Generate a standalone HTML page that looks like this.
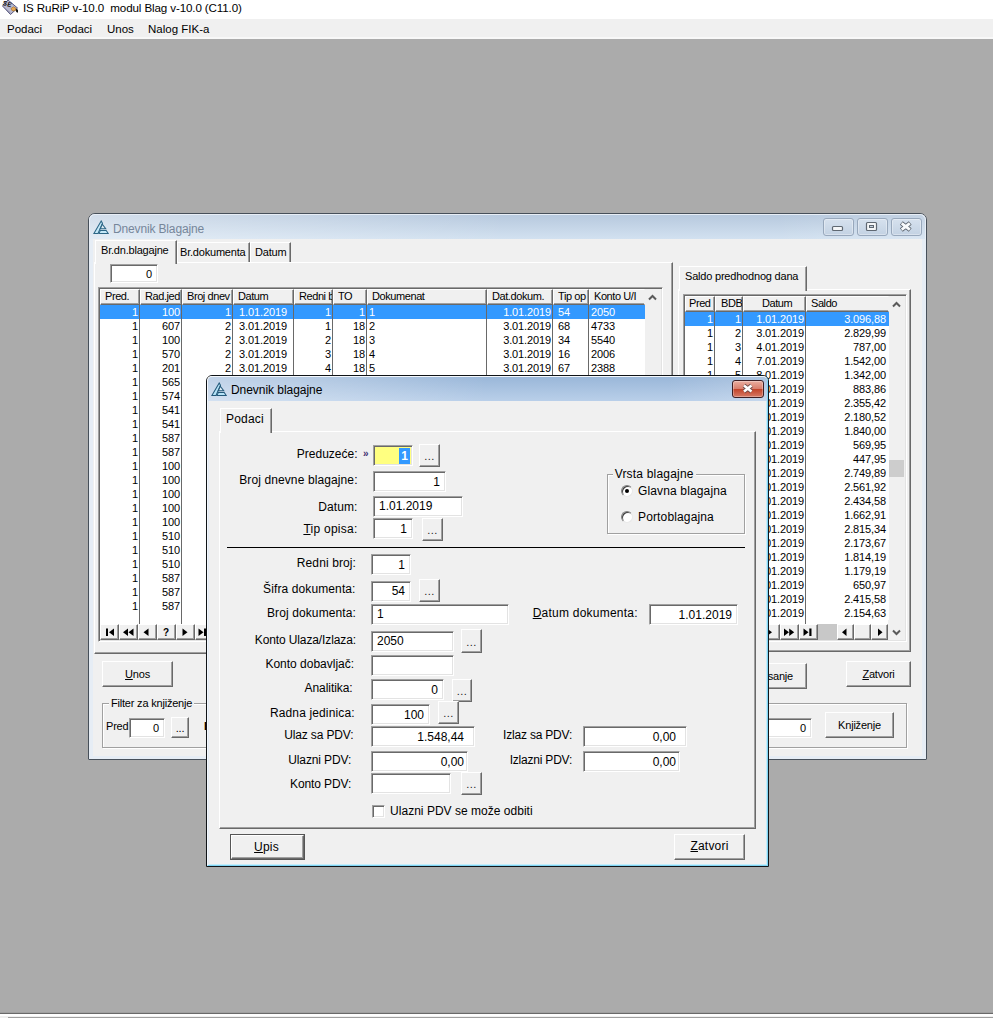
<!DOCTYPE html>
<html><head><meta charset="utf-8"><title>IS RuRiP</title>
<style>
*{box-sizing:border-box;margin:0;padding:0}
html,body{width:993px;height:1018px;overflow:hidden;background:#ababab;font-family:"Liberation Sans",sans-serif;font-size:12px;letter-spacing:0.2px;color:#000}
div,span{position:absolute;white-space:nowrap}
u{text-decoration:underline;text-underline-offset:1px}
.t11{font-size:11px;letter-spacing:-0.2px}
.lbl{height:14px;line-height:14px;text-align:right}
.ll{height:14px;line-height:14px}
.ed{background:#fff;border:1px solid;border-color:#a0a0a0 #fff #fff #a0a0a0;box-shadow:inset 1px 1px 0 #696969,inset -1px -1px 0 #e3e3e3;line-height:15px;padding:2px 5px 0 5px;letter-spacing:0}
.r{text-align:right}
.btn{background:#f0f0f0;border:1px solid;border-color:#fff #696969 #696969 #fff;box-shadow:inset -1px -1px 0 #a0a0a0,inset 1px 1px 0 #f0f0f0;text-align:center}
.gb{border:1px solid #a0a0a0;box-shadow:inset 1px 1px 0 #fff,1px 1px 0 #fff}
.gbl{background:#f0f0f0;padding:0 2px;height:14px;line-height:14px}
.gh{height:16px;line-height:12px;font-size:11px;letter-spacing:-0.42px;background:#f0f0f0;padding:0 0 0 4px;overflow:hidden;border:1px solid;border-color:#fff #696969 #696969 #fff;box-shadow:inset -1px -1px 0 #a0a0a0}
.gh.gl{border-right-color:#f0f0f0;box-shadow:inset 0 -1px 0 #a0a0a0}
.gc{height:14px;line-height:14px;font-size:11px;letter-spacing:-0.12px;padding:0;overflow:hidden;background:#fff;border-right:1px solid #696969}
.gc.gl{border-right:1px solid #fff}
.gc.gl.sel{border-right-color:#3399ff}
.gc.sel{background:#3399ff;color:#fff;border-right-color:#696969}
.vs{width:1px;background:#696969}
.nav{background:#f0f0f0;border:1px solid;border-color:#fff #696969 #696969 #fff;box-shadow:inset -1px -1px 0 #a0a0a0;height:16px;width:19px}
.tab{background:#f0f0f0;border-top:1px solid #fff;border-left:1px solid #fff;border-right:1px solid #696969;box-shadow:inset -1px 0 0 #a0a0a0;font-size:11px;letter-spacing:-0.2px;text-align:left}
</style></head><body>

<!-- app title + menu -->
<div style="left:0;top:0;width:993px;height:19px;background:#fff"></div>
<svg style="position:absolute;left:0;top:0" width="20" height="16" viewBox="0 0 20 16"><path d="M2.500 6 L8 0 L17.500 8 L10.500 14.500 Z" fill="#b9b9cf" stroke="#5a5a80" stroke-width="1"/><path d="M4 7.500 L10.500 13" stroke="#8a8aa8" stroke-width="1"/><path d="M11 8.500 L13.500 6.800 L16 8.300 L15.500 10.500 L12.500 11 Z" fill="#e8a850" stroke="#a06a20" stroke-width="0.600"/><path d="M15.800 8.800 L18 9.800 L18 12.800 L16.200 12 Z" fill="#111"/><text x="2.600" y="4.800" font-family="Liberation Sans, sans-serif" font-size="6.500" font-weight="bold" fill="#111" transform="rotate(18 3 4)">SE</text></svg>
<div style="left:23px;top:0;height:16px;line-height:16px;font-size:11.6px;letter-spacing:-0.12px;white-space:pre">IS RuRiP v-10.0  modul Blag v-10.0 (C11.0)</div>
<div style="left:0;top:19px;width:993px;height:18px;background:#f0f0f0"></div>
<div style="left:0;top:37px;width:993px;height:2px;background:#f8f8f8"></div>
<div style="left:7px;top:21px;height:16px;line-height:16px;font-size:11.5px;letter-spacing:0">Podaci</div>
<div style="left:57px;top:21px;height:16px;line-height:16px;font-size:11.5px;letter-spacing:0">Podaci</div>
<div style="left:107px;top:21px;height:16px;line-height:16px;font-size:11.5px;letter-spacing:0">Unos</div>
<div style="left:148px;top:21px;height:16px;line-height:16px;font-size:11.5px;letter-spacing:0">Nalog FIK-a</div>

<!-- bottom status edge -->
<div style="left:0;top:1012px;width:993px;height:1px;background:#a0a0a0"></div>
<div style="left:0;top:1013px;width:993px;height:1px;background:#696969"></div>
<div style="left:0;top:1014px;width:993px;height:2px;background:#fff"></div>
<div style="left:0;top:1016px;width:993px;height:2px;background:#f0f0f0"></div>
<div style="left:8px;top:1017px;width:985px;height:1px;background:#a0a0a0"></div>

<!-- ================= Window 1 ================= -->
<div id="w1" style="left:88px;top:213px;width:839px;height:547px;border:1px solid #47505a;border-radius:7px 7px 1px 1px;background:#e6edf5"></div>
<div style="left:89px;top:214px;width:837px;height:25px;border-radius:6px 6px 0 0;background:linear-gradient(to right,rgba(255,255,255,.38) 0%,rgba(255,255,255,.2) 25%,rgba(255,255,255,0) 50%,rgba(255,255,255,0) 82%,rgba(255,255,255,.18) 100%),linear-gradient(#b7c9de,#d2e1f0);border-top:1px solid #e8eef6;border-left:1px solid #e8eef6;border-right:1px solid #e8eef6"></div>
<div style="left:93px;top:239px;width:829px;height:517px;background:#f0f0f0"></div>
<svg style="position:absolute;left:93px;top:220px" width="16" height="15" viewBox="0 0 16 15"><g fill="#c4e8f8" stroke="#2b6585" stroke-width="1.050" stroke-linejoin="miter"><path d="M0.900 13.400 L8.200 1 L9.500 3.300 L5 13.400 Z"/><path d="M9.300 4.300 L12.700 8.700 L7.300 8.700 Z" fill="#e0ecf4"/><path d="M7.400 10.400 L13.200 10.400 L15.200 13.400 L6 13.400 Z"/></g></svg>
<div style="left:113px;top:221px;height:17px;line-height:17px;font-size:12px;letter-spacing:-0.15px;color:#76869a">Dnevnik Blagajne</div>
<!-- caption buttons -->
<div class="cb" style="left:823px;top:218px;width:31px;height:18px;border:1px solid #98a8bc;border-radius:3px;background:linear-gradient(#d6e1ee,#c3d2e3);box-shadow:inset 0 0 0 1px rgba(255,255,255,.35)"></div>
<div class="cb" style="left:857px;top:218px;width:31px;height:18px;border:1px solid #98a8bc;border-radius:3px;background:linear-gradient(#d6e1ee,#c3d2e3);box-shadow:inset 0 0 0 1px rgba(255,255,255,.35)"></div>
<div class="cb" style="left:891px;top:218px;width:31px;height:18px;border:1px solid #98a8bc;border-radius:3px;background:linear-gradient(#d6e1ee,#c3d2e3);box-shadow:inset 0 0 0 1px rgba(255,255,255,.35)"></div>
<svg style="position:absolute;left:823px;top:218px" width="100" height="18" viewBox="0 0 100 18"><rect x="9.500" y="8.500" width="10" height="4" rx="1" fill="#f4f6f8" stroke="#5f6872" stroke-width="1.200"/><rect x="43.500" y="4.500" width="10" height="8" rx="1" fill="#f4f6f8" stroke="#5f6872" stroke-width="1.200"/><rect x="46.500" y="7.500" width="4" height="2" fill="#c4d0de" stroke="#5f6872"/><path d="M78.300 5 L87.200 12 M87.200 5 L78.300 12" stroke="#59626c" stroke-width="4.600"/><path d="M78.700 5.300 L86.800 11.700 M86.800 5.300 L78.700 11.700" stroke="#f8fafc" stroke-width="2.800"/></svg>

<!-- left tab control page -->
<div style="left:94px;top:262px;width:579px;height:392px;border:1px solid;border-color:#fff #696969 #696969 #fff;box-shadow:inset -1px -1px 0 #a0a0a0"></div>
<div class="tab" style="left:95px;top:240px;width:82px;height:24px;padding:2px 0 0 5px;line-height:14px">Br.dn.blagajne</div>
<div class="tab" style="left:177px;top:242px;width:73px;height:20px;padding:2px 0 0 2px;line-height:14px">Br.dokumenta</div>
<div class="tab" style="left:250px;top:242px;width:41px;height:20px;padding:2px 0 0 4px;line-height:14px">Datum</div>
<div class="ed r t11" style="left:110px;top:264px;width:48px;height:19px;padding-right:5px">0</div>

<!-- grid 1 frame -->
<div style="left:98px;top:287px;width:565px;height:355px;background:#fff;border:1px solid;border-color:#a0a0a0 #fff #fff #a0a0a0;box-shadow:inset 1px 1px 0 #696969,inset -1px -1px 0 #e3e3e3"></div>
<div style="left:645px;top:289px;width:16px;height:351px;background:#f0f0f0"></div>
<div class="vs" style="left:139px;top:305px;height:319px"></div><div class="vs" style="left:181px;top:305px;height:319px"></div><div class="vs" style="left:232px;top:305px;height:319px"></div><div class="vs" style="left:293px;top:305px;height:319px"></div><div class="vs" style="left:332px;top:305px;height:319px"></div><div class="vs" style="left:366px;top:305px;height:319px"></div><div class="vs" style="left:486px;top:305px;height:319px"></div><div class="vs" style="left:552px;top:305px;height:319px"></div><div class="vs" style="left:588px;top:305px;height:319px"></div>
<div class="gh" style="left:100px;top:289px;width:40px;padding-left:4px">Pred.</div>
<div class="gh" style="left:140px;top:289px;width:42px;padding-left:4px">Rad.jed</div>
<div class="gh" style="left:182px;top:289px;width:51px;padding-left:4px">Broj dnev</div>
<div class="gh" style="left:233px;top:289px;width:61px;padding-left:4px">Datum</div>
<div class="gh" style="left:294px;top:289px;width:39px;padding-left:4px">Redni b</div>
<div class="gh" style="left:333px;top:289px;width:34px;padding-left:4px">TO</div>
<div class="gh" style="left:367px;top:289px;width:120px;padding-left:4px">Dokumenat</div>
<div class="gh" style="left:487px;top:289px;width:66px;padding-left:4px">Dat.dokum.</div>
<div class="gh" style="left:553px;top:289px;width:36px;padding-left:4px">Tip op</div>
<div class="gh gl" style="left:589px;top:289px;width:56px;padding-left:4px">Konto U/I</div>
<div class="gc sel" style="left:100px;top:305px;width:40px;text-align:right;padding-right:1px">1</div>
<div class="gc sel" style="left:140px;top:305px;width:42px;text-align:right;padding-right:1px">100</div>
<div class="gc sel" style="left:182px;top:305px;width:51px;text-align:right;padding-right:1px">1</div>
<div class="gc sel" style="left:233px;top:305px;width:61px;text-align:center;">1.01.2019</div>
<div class="gc sel" style="left:294px;top:305px;width:39px;text-align:right;padding-right:1px">1</div>
<div class="gc sel" style="left:333px;top:305px;width:34px;text-align:right;padding-right:1px">1</div>
<div class="gc sel" style="left:367px;top:305px;width:120px;text-align:left;padding-left:2px">1</div>
<div class="gc sel" style="left:487px;top:305px;width:66px;text-align:right;padding-right:1px">1.01.2019</div>
<div class="gc sel" style="left:553px;top:305px;width:36px;text-align:left;padding-left:5px">54</div>
<div class="gc gl sel" style="left:589px;top:305px;width:56px;text-align:left;padding-left:2px">2050</div>
<div class="gc" style="left:100px;top:319px;width:40px;text-align:right;padding-right:1px">1</div>
<div class="gc" style="left:140px;top:319px;width:42px;text-align:right;padding-right:1px">607</div>
<div class="gc" style="left:182px;top:319px;width:51px;text-align:right;padding-right:1px">2</div>
<div class="gc" style="left:233px;top:319px;width:61px;text-align:center;">3.01.2019</div>
<div class="gc" style="left:294px;top:319px;width:39px;text-align:right;padding-right:1px">1</div>
<div class="gc" style="left:333px;top:319px;width:34px;text-align:right;padding-right:1px">18</div>
<div class="gc" style="left:367px;top:319px;width:120px;text-align:left;padding-left:2px">2</div>
<div class="gc" style="left:487px;top:319px;width:66px;text-align:right;padding-right:1px">3.01.2019</div>
<div class="gc" style="left:553px;top:319px;width:36px;text-align:left;padding-left:5px">68</div>
<div class="gc gl" style="left:589px;top:319px;width:56px;text-align:left;padding-left:2px">4733</div>
<div class="gc" style="left:100px;top:333px;width:40px;text-align:right;padding-right:1px">1</div>
<div class="gc" style="left:140px;top:333px;width:42px;text-align:right;padding-right:1px">100</div>
<div class="gc" style="left:182px;top:333px;width:51px;text-align:right;padding-right:1px">2</div>
<div class="gc" style="left:233px;top:333px;width:61px;text-align:center;">3.01.2019</div>
<div class="gc" style="left:294px;top:333px;width:39px;text-align:right;padding-right:1px">2</div>
<div class="gc" style="left:333px;top:333px;width:34px;text-align:right;padding-right:1px">18</div>
<div class="gc" style="left:367px;top:333px;width:120px;text-align:left;padding-left:2px">3</div>
<div class="gc" style="left:487px;top:333px;width:66px;text-align:right;padding-right:1px">3.01.2019</div>
<div class="gc" style="left:553px;top:333px;width:36px;text-align:left;padding-left:5px">34</div>
<div class="gc gl" style="left:589px;top:333px;width:56px;text-align:left;padding-left:2px">5540</div>
<div class="gc" style="left:100px;top:347px;width:40px;text-align:right;padding-right:1px">1</div>
<div class="gc" style="left:140px;top:347px;width:42px;text-align:right;padding-right:1px">570</div>
<div class="gc" style="left:182px;top:347px;width:51px;text-align:right;padding-right:1px">2</div>
<div class="gc" style="left:233px;top:347px;width:61px;text-align:center;">3.01.2019</div>
<div class="gc" style="left:294px;top:347px;width:39px;text-align:right;padding-right:1px">3</div>
<div class="gc" style="left:333px;top:347px;width:34px;text-align:right;padding-right:1px">18</div>
<div class="gc" style="left:367px;top:347px;width:120px;text-align:left;padding-left:2px">4</div>
<div class="gc" style="left:487px;top:347px;width:66px;text-align:right;padding-right:1px">3.01.2019</div>
<div class="gc" style="left:553px;top:347px;width:36px;text-align:left;padding-left:5px">16</div>
<div class="gc gl" style="left:589px;top:347px;width:56px;text-align:left;padding-left:2px">2006</div>
<div class="gc" style="left:100px;top:361px;width:40px;text-align:right;padding-right:1px">1</div>
<div class="gc" style="left:140px;top:361px;width:42px;text-align:right;padding-right:1px">201</div>
<div class="gc" style="left:182px;top:361px;width:51px;text-align:right;padding-right:1px">2</div>
<div class="gc" style="left:233px;top:361px;width:61px;text-align:center;">3.01.2019</div>
<div class="gc" style="left:294px;top:361px;width:39px;text-align:right;padding-right:1px">4</div>
<div class="gc" style="left:333px;top:361px;width:34px;text-align:right;padding-right:1px">18</div>
<div class="gc" style="left:367px;top:361px;width:120px;text-align:left;padding-left:2px">5</div>
<div class="gc" style="left:487px;top:361px;width:66px;text-align:right;padding-right:1px">3.01.2019</div>
<div class="gc" style="left:553px;top:361px;width:36px;text-align:left;padding-left:5px">67</div>
<div class="gc gl" style="left:589px;top:361px;width:56px;text-align:left;padding-left:2px">2388</div>
<div class="gc" style="left:100px;top:375px;width:40px;text-align:right;padding-right:1px">1</div>
<div class="gc" style="left:140px;top:375px;width:42px;text-align:right;padding-right:1px">565</div>
<div class="gc" style="left:182px;top:375px;width:51px;text-align:right;padding-right:1px"></div>
<div class="gc" style="left:233px;top:375px;width:61px;text-align:center;"></div>
<div class="gc" style="left:294px;top:375px;width:39px;text-align:right;padding-right:1px"></div>
<div class="gc" style="left:333px;top:375px;width:34px;text-align:right;padding-right:1px"></div>
<div class="gc" style="left:367px;top:375px;width:120px;text-align:left;padding-left:2px"></div>
<div class="gc" style="left:487px;top:375px;width:66px;text-align:right;padding-right:1px"></div>
<div class="gc" style="left:553px;top:375px;width:36px;text-align:left;padding-left:5px"></div>
<div class="gc gl" style="left:589px;top:375px;width:56px;text-align:left;padding-left:2px"></div>
<div class="gc" style="left:100px;top:389px;width:40px;text-align:right;padding-right:1px">1</div>
<div class="gc" style="left:140px;top:389px;width:42px;text-align:right;padding-right:1px">574</div>
<div class="gc" style="left:182px;top:389px;width:51px;text-align:right;padding-right:1px"></div>
<div class="gc" style="left:233px;top:389px;width:61px;text-align:center;"></div>
<div class="gc" style="left:294px;top:389px;width:39px;text-align:right;padding-right:1px"></div>
<div class="gc" style="left:333px;top:389px;width:34px;text-align:right;padding-right:1px"></div>
<div class="gc" style="left:367px;top:389px;width:120px;text-align:left;padding-left:2px"></div>
<div class="gc" style="left:487px;top:389px;width:66px;text-align:right;padding-right:1px"></div>
<div class="gc" style="left:553px;top:389px;width:36px;text-align:left;padding-left:5px"></div>
<div class="gc gl" style="left:589px;top:389px;width:56px;text-align:left;padding-left:2px"></div>
<div class="gc" style="left:100px;top:403px;width:40px;text-align:right;padding-right:1px">1</div>
<div class="gc" style="left:140px;top:403px;width:42px;text-align:right;padding-right:1px">541</div>
<div class="gc" style="left:182px;top:403px;width:51px;text-align:right;padding-right:1px"></div>
<div class="gc" style="left:233px;top:403px;width:61px;text-align:center;"></div>
<div class="gc" style="left:294px;top:403px;width:39px;text-align:right;padding-right:1px"></div>
<div class="gc" style="left:333px;top:403px;width:34px;text-align:right;padding-right:1px"></div>
<div class="gc" style="left:367px;top:403px;width:120px;text-align:left;padding-left:2px"></div>
<div class="gc" style="left:487px;top:403px;width:66px;text-align:right;padding-right:1px"></div>
<div class="gc" style="left:553px;top:403px;width:36px;text-align:left;padding-left:5px"></div>
<div class="gc gl" style="left:589px;top:403px;width:56px;text-align:left;padding-left:2px"></div>
<div class="gc" style="left:100px;top:417px;width:40px;text-align:right;padding-right:1px">1</div>
<div class="gc" style="left:140px;top:417px;width:42px;text-align:right;padding-right:1px">541</div>
<div class="gc" style="left:182px;top:417px;width:51px;text-align:right;padding-right:1px"></div>
<div class="gc" style="left:233px;top:417px;width:61px;text-align:center;"></div>
<div class="gc" style="left:294px;top:417px;width:39px;text-align:right;padding-right:1px"></div>
<div class="gc" style="left:333px;top:417px;width:34px;text-align:right;padding-right:1px"></div>
<div class="gc" style="left:367px;top:417px;width:120px;text-align:left;padding-left:2px"></div>
<div class="gc" style="left:487px;top:417px;width:66px;text-align:right;padding-right:1px"></div>
<div class="gc" style="left:553px;top:417px;width:36px;text-align:left;padding-left:5px"></div>
<div class="gc gl" style="left:589px;top:417px;width:56px;text-align:left;padding-left:2px"></div>
<div class="gc" style="left:100px;top:431px;width:40px;text-align:right;padding-right:1px">1</div>
<div class="gc" style="left:140px;top:431px;width:42px;text-align:right;padding-right:1px">587</div>
<div class="gc" style="left:182px;top:431px;width:51px;text-align:right;padding-right:1px"></div>
<div class="gc" style="left:233px;top:431px;width:61px;text-align:center;"></div>
<div class="gc" style="left:294px;top:431px;width:39px;text-align:right;padding-right:1px"></div>
<div class="gc" style="left:333px;top:431px;width:34px;text-align:right;padding-right:1px"></div>
<div class="gc" style="left:367px;top:431px;width:120px;text-align:left;padding-left:2px"></div>
<div class="gc" style="left:487px;top:431px;width:66px;text-align:right;padding-right:1px"></div>
<div class="gc" style="left:553px;top:431px;width:36px;text-align:left;padding-left:5px"></div>
<div class="gc gl" style="left:589px;top:431px;width:56px;text-align:left;padding-left:2px"></div>
<div class="gc" style="left:100px;top:445px;width:40px;text-align:right;padding-right:1px">1</div>
<div class="gc" style="left:140px;top:445px;width:42px;text-align:right;padding-right:1px">587</div>
<div class="gc" style="left:182px;top:445px;width:51px;text-align:right;padding-right:1px"></div>
<div class="gc" style="left:233px;top:445px;width:61px;text-align:center;"></div>
<div class="gc" style="left:294px;top:445px;width:39px;text-align:right;padding-right:1px"></div>
<div class="gc" style="left:333px;top:445px;width:34px;text-align:right;padding-right:1px"></div>
<div class="gc" style="left:367px;top:445px;width:120px;text-align:left;padding-left:2px"></div>
<div class="gc" style="left:487px;top:445px;width:66px;text-align:right;padding-right:1px"></div>
<div class="gc" style="left:553px;top:445px;width:36px;text-align:left;padding-left:5px"></div>
<div class="gc gl" style="left:589px;top:445px;width:56px;text-align:left;padding-left:2px"></div>
<div class="gc" style="left:100px;top:459px;width:40px;text-align:right;padding-right:1px">1</div>
<div class="gc" style="left:140px;top:459px;width:42px;text-align:right;padding-right:1px">100</div>
<div class="gc" style="left:182px;top:459px;width:51px;text-align:right;padding-right:1px"></div>
<div class="gc" style="left:233px;top:459px;width:61px;text-align:center;"></div>
<div class="gc" style="left:294px;top:459px;width:39px;text-align:right;padding-right:1px"></div>
<div class="gc" style="left:333px;top:459px;width:34px;text-align:right;padding-right:1px"></div>
<div class="gc" style="left:367px;top:459px;width:120px;text-align:left;padding-left:2px"></div>
<div class="gc" style="left:487px;top:459px;width:66px;text-align:right;padding-right:1px"></div>
<div class="gc" style="left:553px;top:459px;width:36px;text-align:left;padding-left:5px"></div>
<div class="gc gl" style="left:589px;top:459px;width:56px;text-align:left;padding-left:2px"></div>
<div class="gc" style="left:100px;top:473px;width:40px;text-align:right;padding-right:1px">1</div>
<div class="gc" style="left:140px;top:473px;width:42px;text-align:right;padding-right:1px">100</div>
<div class="gc" style="left:182px;top:473px;width:51px;text-align:right;padding-right:1px"></div>
<div class="gc" style="left:233px;top:473px;width:61px;text-align:center;"></div>
<div class="gc" style="left:294px;top:473px;width:39px;text-align:right;padding-right:1px"></div>
<div class="gc" style="left:333px;top:473px;width:34px;text-align:right;padding-right:1px"></div>
<div class="gc" style="left:367px;top:473px;width:120px;text-align:left;padding-left:2px"></div>
<div class="gc" style="left:487px;top:473px;width:66px;text-align:right;padding-right:1px"></div>
<div class="gc" style="left:553px;top:473px;width:36px;text-align:left;padding-left:5px"></div>
<div class="gc gl" style="left:589px;top:473px;width:56px;text-align:left;padding-left:2px"></div>
<div class="gc" style="left:100px;top:487px;width:40px;text-align:right;padding-right:1px">1</div>
<div class="gc" style="left:140px;top:487px;width:42px;text-align:right;padding-right:1px">100</div>
<div class="gc" style="left:182px;top:487px;width:51px;text-align:right;padding-right:1px"></div>
<div class="gc" style="left:233px;top:487px;width:61px;text-align:center;"></div>
<div class="gc" style="left:294px;top:487px;width:39px;text-align:right;padding-right:1px"></div>
<div class="gc" style="left:333px;top:487px;width:34px;text-align:right;padding-right:1px"></div>
<div class="gc" style="left:367px;top:487px;width:120px;text-align:left;padding-left:2px"></div>
<div class="gc" style="left:487px;top:487px;width:66px;text-align:right;padding-right:1px"></div>
<div class="gc" style="left:553px;top:487px;width:36px;text-align:left;padding-left:5px"></div>
<div class="gc gl" style="left:589px;top:487px;width:56px;text-align:left;padding-left:2px"></div>
<div class="gc" style="left:100px;top:501px;width:40px;text-align:right;padding-right:1px">1</div>
<div class="gc" style="left:140px;top:501px;width:42px;text-align:right;padding-right:1px">100</div>
<div class="gc" style="left:182px;top:501px;width:51px;text-align:right;padding-right:1px"></div>
<div class="gc" style="left:233px;top:501px;width:61px;text-align:center;"></div>
<div class="gc" style="left:294px;top:501px;width:39px;text-align:right;padding-right:1px"></div>
<div class="gc" style="left:333px;top:501px;width:34px;text-align:right;padding-right:1px"></div>
<div class="gc" style="left:367px;top:501px;width:120px;text-align:left;padding-left:2px"></div>
<div class="gc" style="left:487px;top:501px;width:66px;text-align:right;padding-right:1px"></div>
<div class="gc" style="left:553px;top:501px;width:36px;text-align:left;padding-left:5px"></div>
<div class="gc gl" style="left:589px;top:501px;width:56px;text-align:left;padding-left:2px"></div>
<div class="gc" style="left:100px;top:515px;width:40px;text-align:right;padding-right:1px">1</div>
<div class="gc" style="left:140px;top:515px;width:42px;text-align:right;padding-right:1px">100</div>
<div class="gc" style="left:182px;top:515px;width:51px;text-align:right;padding-right:1px"></div>
<div class="gc" style="left:233px;top:515px;width:61px;text-align:center;"></div>
<div class="gc" style="left:294px;top:515px;width:39px;text-align:right;padding-right:1px"></div>
<div class="gc" style="left:333px;top:515px;width:34px;text-align:right;padding-right:1px"></div>
<div class="gc" style="left:367px;top:515px;width:120px;text-align:left;padding-left:2px"></div>
<div class="gc" style="left:487px;top:515px;width:66px;text-align:right;padding-right:1px"></div>
<div class="gc" style="left:553px;top:515px;width:36px;text-align:left;padding-left:5px"></div>
<div class="gc gl" style="left:589px;top:515px;width:56px;text-align:left;padding-left:2px"></div>
<div class="gc" style="left:100px;top:529px;width:40px;text-align:right;padding-right:1px">1</div>
<div class="gc" style="left:140px;top:529px;width:42px;text-align:right;padding-right:1px">510</div>
<div class="gc" style="left:182px;top:529px;width:51px;text-align:right;padding-right:1px"></div>
<div class="gc" style="left:233px;top:529px;width:61px;text-align:center;"></div>
<div class="gc" style="left:294px;top:529px;width:39px;text-align:right;padding-right:1px"></div>
<div class="gc" style="left:333px;top:529px;width:34px;text-align:right;padding-right:1px"></div>
<div class="gc" style="left:367px;top:529px;width:120px;text-align:left;padding-left:2px"></div>
<div class="gc" style="left:487px;top:529px;width:66px;text-align:right;padding-right:1px"></div>
<div class="gc" style="left:553px;top:529px;width:36px;text-align:left;padding-left:5px"></div>
<div class="gc gl" style="left:589px;top:529px;width:56px;text-align:left;padding-left:2px"></div>
<div class="gc" style="left:100px;top:543px;width:40px;text-align:right;padding-right:1px">1</div>
<div class="gc" style="left:140px;top:543px;width:42px;text-align:right;padding-right:1px">510</div>
<div class="gc" style="left:182px;top:543px;width:51px;text-align:right;padding-right:1px"></div>
<div class="gc" style="left:233px;top:543px;width:61px;text-align:center;"></div>
<div class="gc" style="left:294px;top:543px;width:39px;text-align:right;padding-right:1px"></div>
<div class="gc" style="left:333px;top:543px;width:34px;text-align:right;padding-right:1px"></div>
<div class="gc" style="left:367px;top:543px;width:120px;text-align:left;padding-left:2px"></div>
<div class="gc" style="left:487px;top:543px;width:66px;text-align:right;padding-right:1px"></div>
<div class="gc" style="left:553px;top:543px;width:36px;text-align:left;padding-left:5px"></div>
<div class="gc gl" style="left:589px;top:543px;width:56px;text-align:left;padding-left:2px"></div>
<div class="gc" style="left:100px;top:557px;width:40px;text-align:right;padding-right:1px">1</div>
<div class="gc" style="left:140px;top:557px;width:42px;text-align:right;padding-right:1px">510</div>
<div class="gc" style="left:182px;top:557px;width:51px;text-align:right;padding-right:1px"></div>
<div class="gc" style="left:233px;top:557px;width:61px;text-align:center;"></div>
<div class="gc" style="left:294px;top:557px;width:39px;text-align:right;padding-right:1px"></div>
<div class="gc" style="left:333px;top:557px;width:34px;text-align:right;padding-right:1px"></div>
<div class="gc" style="left:367px;top:557px;width:120px;text-align:left;padding-left:2px"></div>
<div class="gc" style="left:487px;top:557px;width:66px;text-align:right;padding-right:1px"></div>
<div class="gc" style="left:553px;top:557px;width:36px;text-align:left;padding-left:5px"></div>
<div class="gc gl" style="left:589px;top:557px;width:56px;text-align:left;padding-left:2px"></div>
<div class="gc" style="left:100px;top:571px;width:40px;text-align:right;padding-right:1px">1</div>
<div class="gc" style="left:140px;top:571px;width:42px;text-align:right;padding-right:1px">587</div>
<div class="gc" style="left:182px;top:571px;width:51px;text-align:right;padding-right:1px"></div>
<div class="gc" style="left:233px;top:571px;width:61px;text-align:center;"></div>
<div class="gc" style="left:294px;top:571px;width:39px;text-align:right;padding-right:1px"></div>
<div class="gc" style="left:333px;top:571px;width:34px;text-align:right;padding-right:1px"></div>
<div class="gc" style="left:367px;top:571px;width:120px;text-align:left;padding-left:2px"></div>
<div class="gc" style="left:487px;top:571px;width:66px;text-align:right;padding-right:1px"></div>
<div class="gc" style="left:553px;top:571px;width:36px;text-align:left;padding-left:5px"></div>
<div class="gc gl" style="left:589px;top:571px;width:56px;text-align:left;padding-left:2px"></div>
<div class="gc" style="left:100px;top:585px;width:40px;text-align:right;padding-right:1px">1</div>
<div class="gc" style="left:140px;top:585px;width:42px;text-align:right;padding-right:1px">587</div>
<div class="gc" style="left:182px;top:585px;width:51px;text-align:right;padding-right:1px"></div>
<div class="gc" style="left:233px;top:585px;width:61px;text-align:center;"></div>
<div class="gc" style="left:294px;top:585px;width:39px;text-align:right;padding-right:1px"></div>
<div class="gc" style="left:333px;top:585px;width:34px;text-align:right;padding-right:1px"></div>
<div class="gc" style="left:367px;top:585px;width:120px;text-align:left;padding-left:2px"></div>
<div class="gc" style="left:487px;top:585px;width:66px;text-align:right;padding-right:1px"></div>
<div class="gc" style="left:553px;top:585px;width:36px;text-align:left;padding-left:5px"></div>
<div class="gc gl" style="left:589px;top:585px;width:56px;text-align:left;padding-left:2px"></div>
<div class="gc" style="left:100px;top:599px;width:40px;text-align:right;padding-right:1px">1</div>
<div class="gc" style="left:140px;top:599px;width:42px;text-align:right;padding-right:1px">587</div>
<div class="gc" style="left:182px;top:599px;width:51px;text-align:right;padding-right:1px"></div>
<div class="gc" style="left:233px;top:599px;width:61px;text-align:center;"></div>
<div class="gc" style="left:294px;top:599px;width:39px;text-align:right;padding-right:1px"></div>
<div class="gc" style="left:333px;top:599px;width:34px;text-align:right;padding-right:1px"></div>
<div class="gc" style="left:367px;top:599px;width:120px;text-align:left;padding-left:2px"></div>
<div class="gc" style="left:487px;top:599px;width:66px;text-align:right;padding-right:1px"></div>
<div class="gc" style="left:553px;top:599px;width:36px;text-align:left;padding-left:5px"></div>
<div class="gc gl" style="left:589px;top:599px;width:56px;text-align:left;padding-left:2px"></div>
<div style="left:100px;top:624px;width:545px;height:16px;background:#f0f0f0"></div>
<div class="nav" style="left:100px;top:624px"></div>
<div class="nav" style="left:119px;top:624px"></div>
<div class="nav" style="left:138px;top:624px"></div>
<div class="nav" style="left:157px;top:624px"></div>
<div class="nav" style="left:176px;top:624px"></div>
<div class="nav" style="left:195px;top:624px"></div>
<svg style="position:absolute;left:100px;top:624px" width="120" height="16" viewBox="0 0 120 16"><g fill="#000"><rect x="6" y="4.500" width="2" height="7.500"/><path d="M14 4.500 L14 12 L9 8.250 Z"/><path d="M28 4.500 L28 12 L23 8.250 Z M33.500 4.500 L33.500 12 L28.500 8.250 Z"/><path d="M48.500 4.500 L48.500 12 L43.500 8.250 Z"/><path d="M82.500 4.500 L82.500 12 L87.500 8.250 Z"/><path d="M98.500 4.500 L98.500 12 L103.500 8.250 Z"/><rect x="104" y="4.500" width="2" height="7.500"/></g></svg>
<div style="left:157px;top:626px;width:18px;height:14px;line-height:14px;font-size:10px;font-weight:bold;text-align:center;letter-spacing:0">?</div>
<svg style="position:absolute;left:647px;top:293px" width="11" height="8" viewBox="0 0 11 8"><path d="M2 6.500 L5.500 3 L9 6.500" fill="none" stroke="#5a5a5a" stroke-width="2"/></svg>

<!-- right tab control -->
<div style="left:678px;top:289px;width:233px;height:363px;border:1px solid;border-color:#fff #696969 #696969 #fff;box-shadow:inset -1px -1px 0 #a0a0a0"></div>
<div class="tab" style="left:679px;top:266px;width:128px;height:25px;padding:2px 0 0 5px;line-height:14px">Saldo predhodnog dana</div>
<div style="left:683px;top:294px;width:224px;height:348px;background:#fff;border:1px solid;border-color:#a0a0a0 #fff #fff #a0a0a0;box-shadow:inset 1px 1px 0 #696969,inset -1px -1px 0 #e3e3e3"></div>
<div style="left:888px;top:296px;width:17px;height:344px;background:#f0f0f0"></div>
<div class="vs" style="left:714px;top:312px;height:312px"></div><div class="vs" style="left:742px;top:312px;height:312px"></div><div class="vs" style="left:805px;top:312px;height:312px"></div>
<div class="gh" style="left:685px;top:296px;width:30px;padding-left:3px">Pred</div>
<div class="gh" style="left:715px;top:296px;width:28px;padding-left:5px">BDB</div>
<div class="gh" style="left:743px;top:296px;width:63px;padding-left:18px">Datum</div>
<div class="gh gl" style="left:806px;top:296px;width:83px;padding-left:4px">Saldo</div>
<div class="gc sel" style="left:685px;top:312px;width:30px;text-align:right;padding-right:1px">1</div>
<div class="gc sel" style="left:715px;top:312px;width:28px;text-align:right;padding-right:1px">1</div>
<div class="gc sel" style="left:743px;top:312px;width:63px;text-align:right;padding-right:1px">1.01.2019</div>
<div class="gc gl sel" style="left:806px;top:312px;width:83px;text-align:right;padding-right:2px">3.096,88</div>
<div class="gc" style="left:685px;top:326px;width:30px;text-align:right;padding-right:1px">1</div>
<div class="gc" style="left:715px;top:326px;width:28px;text-align:right;padding-right:1px">2</div>
<div class="gc" style="left:743px;top:326px;width:63px;text-align:right;padding-right:1px">3.01.2019</div>
<div class="gc gl" style="left:806px;top:326px;width:83px;text-align:right;padding-right:2px">2.829,99</div>
<div class="gc" style="left:685px;top:340px;width:30px;text-align:right;padding-right:1px">1</div>
<div class="gc" style="left:715px;top:340px;width:28px;text-align:right;padding-right:1px">3</div>
<div class="gc" style="left:743px;top:340px;width:63px;text-align:right;padding-right:1px">4.01.2019</div>
<div class="gc gl" style="left:806px;top:340px;width:83px;text-align:right;padding-right:2px">787,00</div>
<div class="gc" style="left:685px;top:354px;width:30px;text-align:right;padding-right:1px">1</div>
<div class="gc" style="left:715px;top:354px;width:28px;text-align:right;padding-right:1px">4</div>
<div class="gc" style="left:743px;top:354px;width:63px;text-align:right;padding-right:1px">7.01.2019</div>
<div class="gc gl" style="left:806px;top:354px;width:83px;text-align:right;padding-right:2px">1.542,00</div>
<div class="gc" style="left:685px;top:368px;width:30px;text-align:right;padding-right:1px">1</div>
<div class="gc" style="left:715px;top:368px;width:28px;text-align:right;padding-right:1px">5</div>
<div class="gc" style="left:743px;top:368px;width:63px;text-align:right;padding-right:1px">8.01.2019</div>
<div class="gc gl" style="left:806px;top:368px;width:83px;text-align:right;padding-right:2px">1.342,00</div>
<div class="gc" style="left:685px;top:382px;width:30px;text-align:right;padding-right:1px"></div>
<div class="gc" style="left:715px;top:382px;width:28px;text-align:right;padding-right:1px"></div>
<div class="gc" style="left:743px;top:382px;width:63px;text-align:right;padding-right:1px">9.01.2019</div>
<div class="gc gl" style="left:806px;top:382px;width:83px;text-align:right;padding-right:2px">883,86</div>
<div class="gc" style="left:685px;top:396px;width:30px;text-align:right;padding-right:1px"></div>
<div class="gc" style="left:715px;top:396px;width:28px;text-align:right;padding-right:1px"></div>
<div class="gc" style="left:743px;top:396px;width:63px;text-align:right;padding-right:1px">10.01.2019</div>
<div class="gc gl" style="left:806px;top:396px;width:83px;text-align:right;padding-right:2px">2.355,42</div>
<div class="gc" style="left:685px;top:410px;width:30px;text-align:right;padding-right:1px"></div>
<div class="gc" style="left:715px;top:410px;width:28px;text-align:right;padding-right:1px"></div>
<div class="gc" style="left:743px;top:410px;width:63px;text-align:right;padding-right:1px">11.01.2019</div>
<div class="gc gl" style="left:806px;top:410px;width:83px;text-align:right;padding-right:2px">2.180,52</div>
<div class="gc" style="left:685px;top:424px;width:30px;text-align:right;padding-right:1px"></div>
<div class="gc" style="left:715px;top:424px;width:28px;text-align:right;padding-right:1px"></div>
<div class="gc" style="left:743px;top:424px;width:63px;text-align:right;padding-right:1px">14.01.2019</div>
<div class="gc gl" style="left:806px;top:424px;width:83px;text-align:right;padding-right:2px">1.840,00</div>
<div class="gc" style="left:685px;top:438px;width:30px;text-align:right;padding-right:1px"></div>
<div class="gc" style="left:715px;top:438px;width:28px;text-align:right;padding-right:1px"></div>
<div class="gc" style="left:743px;top:438px;width:63px;text-align:right;padding-right:1px">15.01.2019</div>
<div class="gc gl" style="left:806px;top:438px;width:83px;text-align:right;padding-right:2px">569,95</div>
<div class="gc" style="left:685px;top:452px;width:30px;text-align:right;padding-right:1px"></div>
<div class="gc" style="left:715px;top:452px;width:28px;text-align:right;padding-right:1px"></div>
<div class="gc" style="left:743px;top:452px;width:63px;text-align:right;padding-right:1px">16.01.2019</div>
<div class="gc gl" style="left:806px;top:452px;width:83px;text-align:right;padding-right:2px">447,95</div>
<div class="gc" style="left:685px;top:466px;width:30px;text-align:right;padding-right:1px"></div>
<div class="gc" style="left:715px;top:466px;width:28px;text-align:right;padding-right:1px"></div>
<div class="gc" style="left:743px;top:466px;width:63px;text-align:right;padding-right:1px">17.01.2019</div>
<div class="gc gl" style="left:806px;top:466px;width:83px;text-align:right;padding-right:2px">2.749,89</div>
<div class="gc" style="left:685px;top:480px;width:30px;text-align:right;padding-right:1px"></div>
<div class="gc" style="left:715px;top:480px;width:28px;text-align:right;padding-right:1px"></div>
<div class="gc" style="left:743px;top:480px;width:63px;text-align:right;padding-right:1px">18.01.2019</div>
<div class="gc gl" style="left:806px;top:480px;width:83px;text-align:right;padding-right:2px">2.561,92</div>
<div class="gc" style="left:685px;top:494px;width:30px;text-align:right;padding-right:1px"></div>
<div class="gc" style="left:715px;top:494px;width:28px;text-align:right;padding-right:1px"></div>
<div class="gc" style="left:743px;top:494px;width:63px;text-align:right;padding-right:1px">21.01.2019</div>
<div class="gc gl" style="left:806px;top:494px;width:83px;text-align:right;padding-right:2px">2.434,58</div>
<div class="gc" style="left:685px;top:508px;width:30px;text-align:right;padding-right:1px"></div>
<div class="gc" style="left:715px;top:508px;width:28px;text-align:right;padding-right:1px"></div>
<div class="gc" style="left:743px;top:508px;width:63px;text-align:right;padding-right:1px">22.01.2019</div>
<div class="gc gl" style="left:806px;top:508px;width:83px;text-align:right;padding-right:2px">1.662,91</div>
<div class="gc" style="left:685px;top:522px;width:30px;text-align:right;padding-right:1px"></div>
<div class="gc" style="left:715px;top:522px;width:28px;text-align:right;padding-right:1px"></div>
<div class="gc" style="left:743px;top:522px;width:63px;text-align:right;padding-right:1px">23.01.2019</div>
<div class="gc gl" style="left:806px;top:522px;width:83px;text-align:right;padding-right:2px">2.815,34</div>
<div class="gc" style="left:685px;top:536px;width:30px;text-align:right;padding-right:1px"></div>
<div class="gc" style="left:715px;top:536px;width:28px;text-align:right;padding-right:1px"></div>
<div class="gc" style="left:743px;top:536px;width:63px;text-align:right;padding-right:1px">24.01.2019</div>
<div class="gc gl" style="left:806px;top:536px;width:83px;text-align:right;padding-right:2px">2.173,67</div>
<div class="gc" style="left:685px;top:550px;width:30px;text-align:right;padding-right:1px"></div>
<div class="gc" style="left:715px;top:550px;width:28px;text-align:right;padding-right:1px"></div>
<div class="gc" style="left:743px;top:550px;width:63px;text-align:right;padding-right:1px">25.01.2019</div>
<div class="gc gl" style="left:806px;top:550px;width:83px;text-align:right;padding-right:2px">1.814,19</div>
<div class="gc" style="left:685px;top:564px;width:30px;text-align:right;padding-right:1px"></div>
<div class="gc" style="left:715px;top:564px;width:28px;text-align:right;padding-right:1px"></div>
<div class="gc" style="left:743px;top:564px;width:63px;text-align:right;padding-right:1px">28.01.2019</div>
<div class="gc gl" style="left:806px;top:564px;width:83px;text-align:right;padding-right:2px">1.179,19</div>
<div class="gc" style="left:685px;top:578px;width:30px;text-align:right;padding-right:1px"></div>
<div class="gc" style="left:715px;top:578px;width:28px;text-align:right;padding-right:1px"></div>
<div class="gc" style="left:743px;top:578px;width:63px;text-align:right;padding-right:1px">29.01.2019</div>
<div class="gc gl" style="left:806px;top:578px;width:83px;text-align:right;padding-right:2px">650,97</div>
<div class="gc" style="left:685px;top:592px;width:30px;text-align:right;padding-right:1px"></div>
<div class="gc" style="left:715px;top:592px;width:28px;text-align:right;padding-right:1px"></div>
<div class="gc" style="left:743px;top:592px;width:63px;text-align:right;padding-right:1px">30.01.2019</div>
<div class="gc gl" style="left:806px;top:592px;width:83px;text-align:right;padding-right:2px">2.415,58</div>
<div class="gc" style="left:685px;top:606px;width:30px;text-align:right;padding-right:1px"></div>
<div class="gc" style="left:715px;top:606px;width:28px;text-align:right;padding-right:1px"></div>
<div class="gc" style="left:743px;top:606px;width:63px;text-align:right;padding-right:1px">31.01.2019</div>
<div class="gc gl" style="left:806px;top:606px;width:83px;text-align:right;padding-right:2px">2.154,63</div>
<div style="left:685px;top:624px;width:203px;height:16px;background:#f0f0f0"></div>
<div style="left:889px;top:460px;width:15px;height:17px;background:#cdcdcd"></div>
<div class="nav" style="left:761px;top:624px"></div>
<div class="nav" style="left:780px;top:624px"></div>
<div class="nav" style="left:799px;top:624px"></div>
<div style="left:818px;top:624px;width:19px;height:16px;background:#c8c8c8"></div>
<div class="nav" style="left:837px;top:624px;width:17px"></div>
<div class="nav" style="left:854px;top:624px;width:17px"></div>
<div class="nav" style="left:871px;top:624px;width:17px"></div>
<svg style="position:absolute;left:760px;top:624px" width="130" height="16" viewBox="-20 0 130 16"><g fill="#000"><path d="M-13 4.500 L-13 12 L-8 8.250 Z"/><path d="M4 4.500 L4 12 L9 8.250 Z M9.200 4.500 L9.200 12 L14.200 8.250 Z"/><path d="M23.500 4.500 L23.500 12 L28.500 8.250 Z"/><rect x="29.300" y="4.500" width="2.200" height="7.500"/><path d="M66.500 4.500 L66.500 12 L62 8.250 Z"/><path d="M98 4.500 L98 12 L102.500 8.250 Z"/></g></svg>
<svg style="position:absolute;left:891px;top:300px" width="11" height="8" viewBox="0 0 11 8"><path d="M2 6.500 L5.500 3 L9 6.500" fill="none" stroke="#5a5a5a" stroke-width="2"/></svg>
<svg style="position:absolute;left:891px;top:629px" width="11" height="8" viewBox="0 0 11 8"><path d="M2 1.500 L5.500 5 L9 1.500" fill="none" stroke="#5a5a5a" stroke-width="2"/></svg>

<!-- window1 bottom controls -->
<div class="btn t11" style="left:102px;top:661px;width:71px;height:26px;line-height:24px"><u>U</u>nos</div>
<div class="gb" style="left:102px;top:703px;width:805px;height:45px"></div>
<div class="gbl t11" style="left:109px;top:696px">Filter za knjiženje</div>
<div class="ll t11" style="left:106px;top:719px">Pred</div>
<div class="ed r t11" style="left:129px;top:718px;width:36px;height:20px;padding-right:5px">0</div>
<div class="btn t11" style="left:171px;top:717px;width:18px;height:21px;line-height:21px">...</div>
<div class="ll t11" style="left:204px;top:719px;font-weight:bold">B</div>
<div class="btn t11" style="left:740px;top:663px;width:67px;height:26px;line-height:24px;text-align:right;padding-right:13px">Brisanje</div>
<div class="btn t11" style="left:846px;top:661px;width:65px;height:26px;line-height:24px"><u>Z</u>atvori</div>
<div class="ed r t11" style="left:760px;top:718px;width:52px;height:20px;padding-right:5px">0</div>
<div class="btn t11" style="left:825px;top:712px;width:69px;height:26px;line-height:24px">Knjiženje</div>

<!-- ================= Dialog ================= -->
<div style="left:206px;top:375px;width:563px;height:492px;border:1px solid #101418;border-radius:6px 6px 0 0;background:#f0f0f0"></div>
<div style="left:207px;top:376px;width:561px;height:490px;border-radius:5px 5px 0 0;border:1px solid;border-color:#f4f8fc #7fd4f2 #7fd4f2 #f4f8fc;box-shadow:inset 1px 0 0 #e4ecf6,inset -1px -1px 0 #c4ecfa"></div>
<div style="left:208px;top:377px;width:559px;height:24px;border-radius:4px 4px 0 0;background:linear-gradient(to right,rgba(255,255,255,.38) 0%,rgba(255,255,255,.2) 25%,rgba(255,255,255,0) 50%,rgba(255,255,255,0) 82%,rgba(255,255,255,.18) 100%),linear-gradient(#9ab7d9,#b9cfe9)"></div>
<svg style="position:absolute;left:211px;top:382px" width="16" height="15" viewBox="0 0 16 15"><g fill="#b4e2f6" stroke="#23597a" stroke-width="1.050" stroke-linejoin="miter"><path d="M0.900 13.400 L8.200 1 L9.500 3.300 L5 13.400 Z"/><path d="M9.300 4.300 L12.700 8.700 L7.300 8.700 Z" fill="#e0ecf4"/><path d="M7.400 10.400 L13.200 10.400 L15.200 13.400 L6 13.400 Z"/></g></svg>
<div style="left:231px;top:382px;height:17px;line-height:17px;font-size:12px;letter-spacing:-0.05px;color:#000">Dnevnik blagajne</div>
<div style="left:732px;top:380px;width:32px;height:18px;border:1px solid #3d1f24;border-radius:3px;background:linear-gradient(#eaaea0 0%,#d9806e 47%,#c24228 50%,#d67a66 100%);box-shadow:inset 0 0 0 1px rgba(255,255,255,.3)"></div>
<svg style="position:absolute;left:732px;top:380px" width="32" height="18" viewBox="0 0 32 18"><path d="M12 5.500 L19.500 11.500 M19.500 5.500 L12 11.500" stroke="#6b4a48" stroke-width="4.200"/><path d="M12 5.500 L19.500 11.500 M19.500 5.500 L12 11.500" stroke="#fff" stroke-width="2.600"/></svg>

<!-- dialog tab -->
<div style="left:219px;top:431px;width:537px;height:398px;border:1px solid;border-color:#fff #696969 #696969 #fff;box-shadow:inset -1px -1px 0 #a0a0a0"></div>
<div class="tab" style="left:220px;top:408px;width:52px;height:25px;font-size:12px;letter-spacing:0.2px;padding:3px 0 0 5px;line-height:14px">Podaci</div>

<div style="left:363px;top:448px;font-size:10px;line-height:12px;color:#403070;font-weight:bold">»</div>
<div class="ed r" style="left:373px;top:445px;width:40px;height:21px;background:#ffff80;padding:0"></div>
<div style="left:399px;top:448px;width:11px;height:16px;background:#3399ff;color:#fff;line-height:17px;text-align:right;padding-right:2px;font-weight:bold;letter-spacing:0">1</div>
<div class="btn" style="left:419px;top:444px;width:21px;height:23px;line-height:23px;font-size:11px;letter-spacing:0.4px;color:#222">...</div>

<div class="ed r" style="left:373px;top:471px;width:73px;height:21px;padding-top:3px;padding-right:5px">1</div>
<div class="ed" style="left:373px;top:496px;width:90px;height:21px">1.01.2019</div>
<div class="ed r" style="left:373px;top:518px;width:40px;height:21px;padding-top:3px;padding-right:5px">1</div>
<div class="btn" style="left:422px;top:518px;width:21px;height:23px;line-height:23px;font-size:11px;letter-spacing:0.4px;color:#222">...</div>

<div class="gb" style="left:607px;top:474px;width:138px;height:60px"></div>
<div class="radio" style="left:621px;top:485px;width:12px;height:12px;border-radius:50%;background:#fff;border:1px solid;border-color:#808080 #e8e8e8 #e8e8e8 #808080;box-shadow:inset 1px 1px 0 #404040"></div>
<div style="left:625px;top:489px;width:4px;height:4px;border-radius:50%;background:#000"></div>
<div class="radio" style="left:621px;top:511px;width:12px;height:12px;border-radius:50%;background:#fff;border:1px solid;border-color:#808080 #e8e8e8 #e8e8e8 #808080;box-shadow:inset 1px 1px 0 #404040"></div>

<div style="left:227px;top:547px;width:518px;height:1px;background:#000"></div>
<div class="ll" style="left:296.8px;top:447px;letter-spacing:-0.00px">Preduzeće:</div>
<div class="ll" style="left:239.2px;top:473px;letter-spacing:0.11px">Broj dnevne blagajne:</div>
<div class="ll" style="left:318.2px;top:500px;letter-spacing:0.11px">Datum:</div>
<div class="ll" style="left:303.4px;top:522px;letter-spacing:0.26px"><u>T</u>ip opisa:</div>
<div class="gbl" style="left:612.7px;top:467px;letter-spacing:0.19px">Vrsta blagajne</div>
<div class="ll" style="left:638.0px;top:484px;letter-spacing:0.14px">Glavna blagajna</div>
<div class="ll" style="left:638.0px;top:510px;letter-spacing:0.14px">Portoblagajna</div>
<div class="ll" style="left:296.8px;top:556px;letter-spacing:0.11px">Redni broj:</div>
<div class="ll" style="left:263.1px;top:582px;letter-spacing:0.11px">Šifra dokumenta:</div>
<div class="ll" style="left:266.9px;top:606px;letter-spacing:0.12px">Broj dokumenta:</div>
<div class="ll" style="left:532.7px;top:606px;letter-spacing:0.23px"><u>D</u>atum dokumenta:</div>
<div class="ll" style="left:254.8px;top:633px;letter-spacing:-0.12px">Konto Ulaza/Izlaza:</div>
<div class="ll" style="left:265.4px;top:657px;letter-spacing:0.00px">Konto dobavljač:</div>
<div class="ll" style="left:304.6px;top:681px;letter-spacing:-0.08px">Analitika:</div>
<div class="ll" style="left:269.9px;top:706px;letter-spacing:0.14px">Radna jedinica:</div>
<div class="ll" style="left:284.2px;top:728px;letter-spacing:-0.14px">Ulaz sa PDV:</div>
<div class="ll" style="left:503.1px;top:728px;letter-spacing:-0.20px">Izlaz sa PDV:</div>
<div class="ll" style="left:288.3px;top:753px;letter-spacing:-0.13px">Ulazni PDV:</div>
<div class="ll" style="left:509.7px;top:753px;letter-spacing:-0.21px">Izlazni PDV:</div>
<div class="ll" style="left:290.0px;top:777px;letter-spacing:-0.11px">Konto PDV:</div>
<div class="ll" style="left:390.1px;top:804px;letter-spacing:0.02px">Ulazni PDV se može odbiti</div>

<div class="ed r" style="left:371px;top:554px;width:40px;height:21px;padding-top:3px;padding-right:5px">1</div>
<div class="ed r" style="left:371px;top:581px;width:40px;height:21px;padding-right:5px">54</div>
<div class="btn" style="left:419px;top:579px;width:21px;height:23px;line-height:23px;font-size:11px;letter-spacing:0.4px;color:#222">...</div>
<div class="ed" style="left:371px;top:604px;width:138px;height:21px;padding-left:5px">1</div>
<div class="ed r" style="left:649px;top:604px;width:89px;height:21px;padding-top:3px;padding-right:5px">1.01.2019</div>
<div class="ed" style="left:371px;top:631px;width:83px;height:21px">2050</div>
<div class="btn" style="left:461px;top:629px;width:21px;height:24px;line-height:24px;font-size:11px;letter-spacing:0.4px;color:#222">...</div>
<div class="ed" style="left:371px;top:655px;width:83px;height:21px"></div>
<div class="ed r" style="left:371px;top:679px;width:73px;height:21px;padding-top:3px;padding-right:5px">0</div>
<div class="btn" style="left:452px;top:679px;width:20px;height:23px;line-height:23px;font-size:11px;letter-spacing:0.4px;color:#222">...</div>
<div class="ed r" style="left:371px;top:704px;width:59px;height:21px;padding-top:3px;padding-right:5px">100</div>
<div class="btn" style="left:438px;top:701px;width:21px;height:23px;line-height:23px;font-size:11px;letter-spacing:0.4px;color:#222">...</div>
<div class="ed r" style="left:371px;top:726px;width:104px;height:21px;padding-top:3px;padding-right:10px">1.548,44</div>
<div class="ed r" style="left:583px;top:726px;width:104px;height:21px;padding-top:3px;padding-right:10px">0,00</div>
<div class="ed r" style="left:371px;top:751px;width:97px;height:21px;padding-top:3px;padding-right:3px">0,00</div>
<div class="ed r" style="left:583px;top:751px;width:97px;height:21px;padding-top:3px;padding-right:3px">0,00</div>
<div class="ed" style="left:371px;top:773px;width:80px;height:21px"></div>
<div class="btn" style="left:461px;top:772px;width:21px;height:23px;line-height:22px;font-size:11px;letter-spacing:0.4px;color:#222">...</div>
<div class="ed" style="left:372px;top:805px;width:13px;height:13px;padding:0"></div>

<div style="left:230px;top:834px;width:75px;height:26px;border:1px solid #555"></div>
<div class="btn" style="left:231px;top:835px;width:73px;height:24px;line-height:22px;padding-right:2px"><u>U</u>pis</div>
<div class="btn" style="left:674px;top:834px;width:71px;height:26px;line-height:23px"><u>Z</u>atvori</div>

</body></html>
